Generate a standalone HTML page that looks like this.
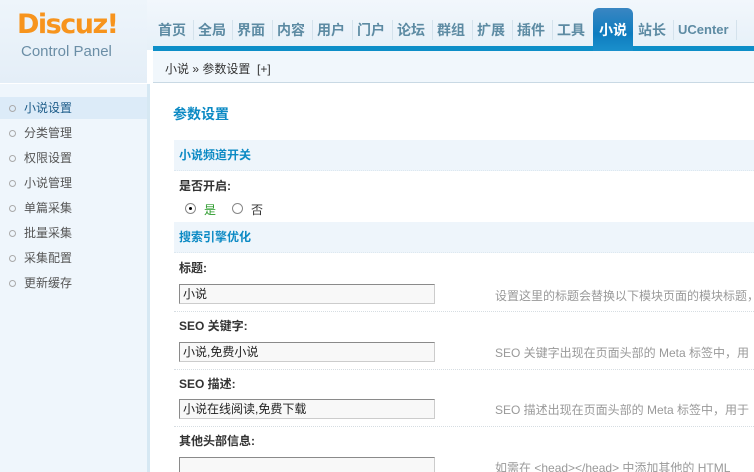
<!DOCTYPE html>
<html><head><meta charset="utf-8"><style>
*{margin:0;padding:0;box-sizing:border-box}
html,body{width:754px;height:472px;overflow:hidden}
body{background:#fff;font:12px "Liberation Sans","Noto Sans CJK SC",sans-serif;color:#333;position:relative}
.abs{position:absolute}
#hd{left:0;top:0;width:754px;height:50px;background:linear-gradient(#f2f7fc,#e6f0f8)}
#logo{left:0;top:0;width:147px;height:83px;background:linear-gradient(#eef5fb,#e4eef7)}
.dz{left:17px;top:9px;font:bold 27px "DejaVu Sans",sans-serif;color:#f7941d;letter-spacing:-1.5px}
.cp{left:21px;top:43px;font-size:15px;color:#6b8ea6}
#bar{left:153px;top:46px;width:601px;height:5px;background:#0d8ec8}
.nav{top:20px;font-size:14px;font-weight:bold;color:#5d8ba3;height:20px;line-height:20px}
.sep{top:20px;width:1px;height:20px;background:#d4e2ec}
#act{left:593px;top:8px;width:40px;height:43px;border-radius:6px 6px 0 0;background:linear-gradient(#3a86c2,#0e7cbf 60%,#1a90cc);color:#fff;font-size:14px;font-weight:bold;text-align:center;line-height:44px}
#bc{left:153px;top:51px;width:601px;height:32px;background:#f1f7fc;border-bottom:1px solid #c9d9e4;padding-left:12px;line-height:36px;color:#333}
#side{left:0;top:84px;width:150px;height:388px;background:#eff6fc;border-right:3px solid #d6e8f3}
.si{left:0;width:147px;height:22px;line-height:22px;padding-left:24px;color:#555}
.si:before{content:"";position:absolute;left:9px;top:8px;width:5px;height:5px;border:1px solid #aaa;border-radius:50%}
.si.on{background:#dcebf8;color:#1b5b88}
.title{left:173px;top:104px;font-size:14px;font-weight:bold;color:#0c8ac4}
.sh{left:174px;width:580px;height:31px;background:#eef5fb;border-bottom:1px dotted #dde8f0;color:#0c8ac4;font-weight:bold;padding-left:5px;line-height:31px}
.lb{left:179px;font-weight:bold;color:#333}
.inp{left:179px;width:256px;height:20px;border:1px solid #8a8a8a;border-right-color:#ccc;border-bottom-color:#ccc;background:#f8f8f8;padding-left:3px;line-height:18px;color:#222}
.tip{left:495px;color:#999;white-space:nowrap}
.dl{left:174px;width:580px;border-top:1px dotted #d6dde2}
.rd{top:203px;width:11px;height:11px;border:1px solid #888;border-radius:50%;background:#fff}
</style></head><body>
<div id="hd" class="abs"></div>
<div id="logo" class="abs"><div class="abs dz">Discuz!</div><div class="abs cp">Control Panel</div></div>
<div id="bar" class="abs"></div>
<div class="abs nav" style="left:158px">首页</div><div class="abs sep" style="left:193px"></div>
<div class="abs nav" style="left:198px">全局</div><div class="abs sep" style="left:232px"></div>
<div class="abs nav" style="left:237px">界面</div><div class="abs sep" style="left:272px"></div>
<div class="abs nav" style="left:277px">内容</div><div class="abs sep" style="left:312px"></div>
<div class="abs nav" style="left:317px">用户</div><div class="abs sep" style="left:352px"></div>
<div class="abs nav" style="left:357px">门户</div><div class="abs sep" style="left:392px"></div>
<div class="abs nav" style="left:397px">论坛</div><div class="abs sep" style="left:432px"></div>
<div class="abs nav" style="left:437px">群组</div><div class="abs sep" style="left:472px"></div>
<div class="abs nav" style="left:477px">扩展</div><div class="abs sep" style="left:512px"></div>
<div class="abs nav" style="left:517px">插件</div><div class="abs sep" style="left:552px"></div>
<div class="abs nav" style="left:557px">工具</div>
<div id="act" class="abs">小说</div>
<div class="abs nav" style="left:638px">站长</div><div class="abs sep" style="left:673px"></div>
<div class="abs nav" style="left:678px;font-size:13px">UCenter</div><div class="abs sep" style="left:736px"></div>
<div id="bc" class="abs">小说 » 参数设置 &nbsp;[+]</div>
<div id="side" class="abs"></div>
<div class="abs si on" style="top:97px">小说设置</div>
<div class="abs si" style="top:122px">分类管理</div>
<div class="abs si" style="top:147px">权限设置</div>
<div class="abs si" style="top:172px">小说管理</div>
<div class="abs si" style="top:197px">单篇采集</div>
<div class="abs si" style="top:222px">批量采集</div>
<div class="abs si" style="top:247px">采集配置</div>
<div class="abs si" style="top:272px">更新缓存</div>
<div class="abs title">参数设置</div>
<div class="abs sh" style="top:140px">小说频道开关</div>
<div class="abs lb" style="top:177px">是否开启:</div>
<div class="abs rd" style="left:185px"><div style="position:absolute;left:3px;top:3px;width:3px;height:3px;background:#000;border-radius:50%"></div></div>
<div class="abs" style="left:204px;top:201px;color:#2a9a2a">是</div>
<div class="abs rd" style="left:232px"></div>
<div class="abs" style="left:251px;top:201px">否</div>
<div class="abs sh" style="top:222px">搜索引擎优化</div>
<div class="abs lb" style="top:259px">标题:</div>
<div class="abs inp" style="top:284px">小说</div>
<div class="abs tip" style="top:287px">设置这里的标题会替换以下模块页面的模块标题，</div>
<div class="abs dl" style="top:311px"></div>
<div class="abs lb" style="top:317px">SEO 关键字:</div>
<div class="abs inp" style="top:342px">小说,免费小说</div>
<div class="abs tip" style="top:344px">SEO 关键字出现在页面头部的 Meta 标签中，用</div>
<div class="abs dl" style="top:369px"></div>
<div class="abs lb" style="top:375px">SEO 描述:</div>
<div class="abs inp" style="top:399px">小说在线阅读,免费下载</div>
<div class="abs tip" style="top:401px">SEO 描述出现在页面头部的 Meta 标签中，用于</div>
<div class="abs dl" style="top:426px"></div>
<div class="abs lb" style="top:432px">其他头部信息:</div>
<div class="abs inp" style="top:457px;height:30px"></div>
<div class="abs tip" style="top:459px">如需在 &lt;head&gt;&lt;/head&gt; 中添加其他的 HTML</div>
</body></html>
